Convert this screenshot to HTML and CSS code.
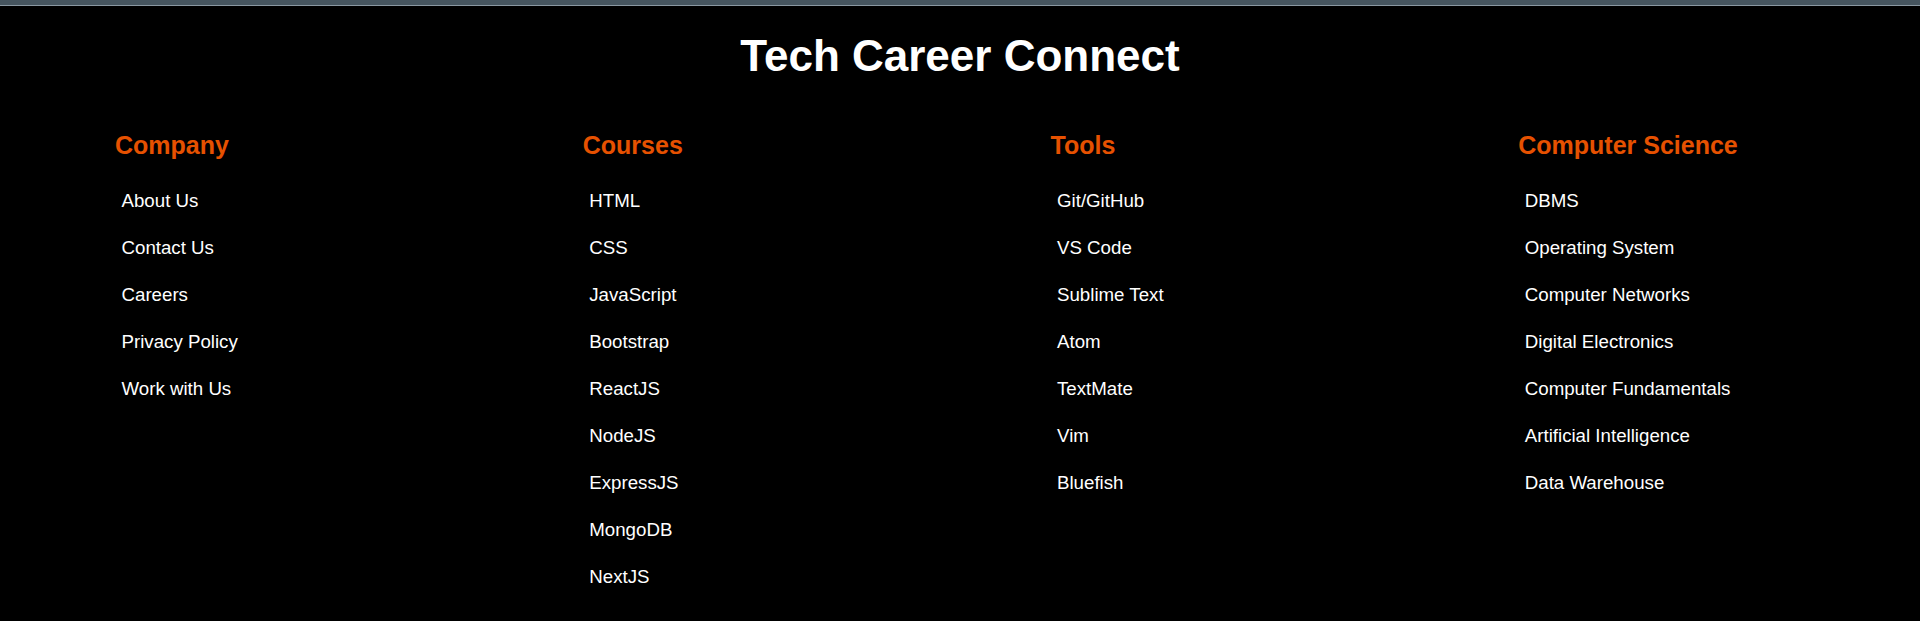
FILE: index.html
```html
<!DOCTYPE html>
<html lang="en">
<head>
<meta charset="utf-8">
<title>Tech Career Connect</title>
<link rel="stylesheet" href="styles.css">
</head>
<body>
<div class="topbar"></div>
<footer class="footer">
  <h1 class="brand">Tech Career Connect</h1>
  <div class="columns">
    <section class="col">
      <h2 class="col-title">Company</h2>
      <ul class="links">
        <li>About Us</li>
        <li>Contact Us</li>
        <li>Careers</li>
        <li>Privacy Policy</li>
        <li>Work with Us</li>
      </ul>
    </section>
    <section class="col">
      <h2 class="col-title">Courses</h2>
      <ul class="links">
        <li>HTML</li>
        <li>CSS</li>
        <li>JavaScript</li>
        <li>Bootstrap</li>
        <li>ReactJS</li>
        <li>NodeJS</li>
        <li>ExpressJS</li>
        <li>MongoDB</li>
        <li>NextJS</li>
      </ul>
    </section>
    <section class="col">
      <h2 class="col-title">Tools</h2>
      <ul class="links">
        <li>Git/GitHub</li>
        <li>VS Code</li>
        <li>Sublime Text</li>
        <li>Atom</li>
        <li>TextMate</li>
        <li>Vim</li>
        <li>Bluefish</li>
      </ul>
    </section>
    <section class="col">
      <h2 class="col-title">Computer Science</h2>
      <ul class="links">
        <li>DBMS</li>
        <li>Operating System</li>
        <li>Computer Networks</li>
        <li>Digital Electronics</li>
        <li>Computer Fundamentals</li>
        <li>Artificial Intelligence</li>
        <li>Data Warehouse</li>
      </ul>
    </section>
  </div>
</footer>
</body>
</html>
```
FILE: styles.css
```css
html, body {
  margin: 0;
  padding: 0;
  background: #000;
  min-height: 100%;
}
body {
  font-family: "Liberation Sans", Arial, sans-serif;
  color: #fff;
}
.topbar {
  height: 5px;
  background: #46555f;
  border-bottom: 1px solid #8a98a2;
}
.footer {
  display: flex;
  flex-direction: column;
}
.brand {
  margin: 25px 0 0;
  font-size: 44px;
  line-height: 50px;
  font-weight: 700;
  text-align: center;
  color: #fff;
}
.columns {
  display: grid;
  grid-template-columns: repeat(4, 467.75px);
  padding-left: 115px;
  margin-top: 50px;
}
.col-title {
  margin: 0 0 17.5px;
  font-size: 25px;
  line-height: 29px;
  font-weight: 700;
  color: #e65100;
}
.links {
  list-style: none;
  margin: 0;
  padding: 0 0 0 6.5px;
}
.links li {
  font-size: 18.7px;
  line-height: 22px;
  padding: 12.5px 0;
  color: #fff;
}
```
